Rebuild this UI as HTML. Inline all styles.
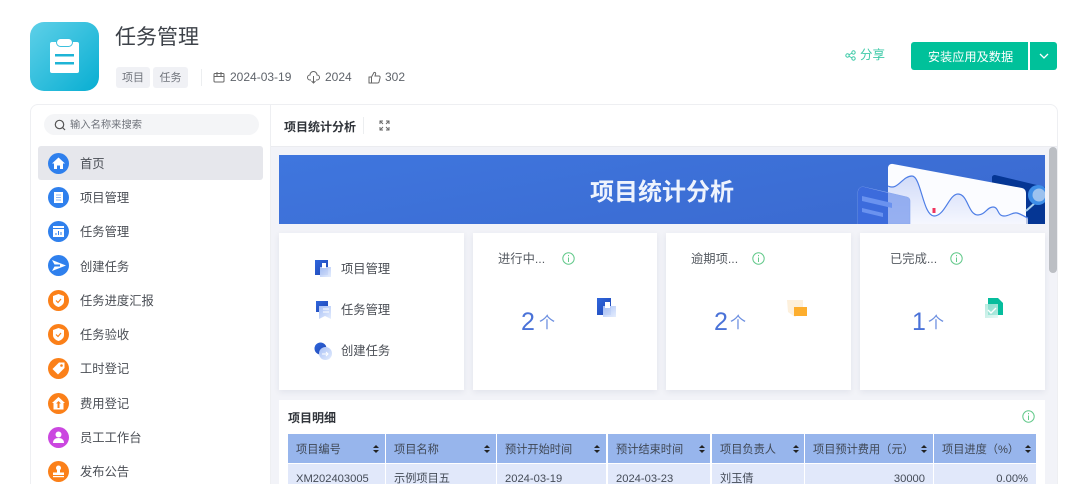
<!DOCTYPE html>
<html lang="zh"><head><meta charset="utf-8"><style>
html,body{margin:0;padding:0;background:#fff;width:1080px;height:484px;overflow:hidden}
#w{position:relative;width:1080px;height:484px;overflow:hidden;font-family:"Liberation Sans","Noto Sans CJK SC",sans-serif;color:#555}
.a{position:absolute}
.t{position:absolute;white-space:nowrap;line-height:1}
svg{position:absolute;display:block;overflow:visible}
.nav{position:absolute;left:80px;font-size:12.3px;color:#4a4e55;line-height:16px;white-space:nowrap}
.dot{position:absolute;left:48px;width:21px;height:21px;border-radius:50%}
.card{position:absolute;top:233px;height:157px;background:#fff;box-shadow:0 2px 6px rgba(40,50,90,.08)}
.th{position:absolute;top:434px;height:29px;background:#97b5ec;font-size:11.2px;color:#3f4754;line-height:32px;white-space:nowrap}
.th span{position:absolute;left:8px}
.th i{position:absolute;top:11px;width:0;height:0;border-left:3px solid transparent;border-right:3px solid transparent;border-bottom:3.500px solid #222}
.th b{position:absolute;top:15.500px;width:0;height:0;border-left:3px solid transparent;border-right:3px solid transparent;border-top:3.500px solid #222}
.td{position:absolute;top:464px;height:20px;background:#e1e8fa;font-size:11.2px;color:#444b57;line-height:30px;white-space:nowrap;overflow:hidden}
</style></head><body><div id="w">

<svg width="0" height="0" style="left:0;top:0"><defs>
<linearGradient id="bl" x1="0" y1="0" x2="1" y2="1"><stop offset="0" stop-color="#2f66dc"/><stop offset="1" stop-color="#1f46b4"/></linearGradient>
<linearGradient id="lb" x1="0" y1="0" x2="1" y2="1"><stop offset="0" stop-color="#a9c1f6"/><stop offset="1" stop-color="#e3ecfd"/></linearGradient>
<linearGradient id="gr" x1="0" y1="0" x2="1" y2="1"><stop offset="0" stop-color="#a5e6d8"/><stop offset="1" stop-color="#e0f7f2"/></linearGradient>
</defs></svg>

<div class="a" style="left:30px;top:22px;width:69px;height:69px;border-radius:14px;background:linear-gradient(135deg,#5ed0e8,#08aed2)"></div>
<svg style="left:30px;top:22px" width="69" height="69" viewBox="0 0 69 69"><rect x="20" y="20" width="29" height="31" rx="2" fill="#fff"/><rect x="26.500" y="16.500" width="16" height="8" rx="4" fill="#fff" stroke="#3cc0de" stroke-width="1"/><rect x="25" y="32" width="19" height="2.500" fill="#1eb4d6"/><rect x="25" y="40" width="19" height="2.500" fill="#1eb4d6"/></svg>
<div class="t" style="left:115px;top:27px;font-size:21px;color:#3d4249">任务管理</div>
<div class="a" style="left:116px;top:67px;width:34px;height:21px;background:#f0f1f5;border-radius:3px;font-size:11px;line-height:23px;text-align:center;color:#70747c">项目</div>
<div class="a" style="left:153px;top:67px;width:35px;height:21px;background:#f0f1f5;border-radius:3px;font-size:11px;line-height:23px;text-align:center;color:#70747c">任务</div>
<div class="a" style="left:201px;top:69px;width:1px;height:17px;background:#eceef0"></div>
<svg style="left:213px;top:71px" width="12" height="12" viewBox="0 0 12 12" fill="none" stroke="#666" stroke-width="1"><rect x="1" y="2.500" width="10" height="8.500" rx="1"/><path d="M1 5.500H11M4 1V5.500M8 1V5.500"/></svg>
<div class="t" style="left:230px;top:71px;font-size:12px;color:#5f646b">2024-03-19</div>
<svg style="left:307px;top:71px" width="13" height="13" viewBox="0 0 13 13" fill="none" stroke="#666" stroke-width="1"><path d="M4 9H3A2.500 2.500 0 0 1 3 4 3.500 3.500 0 0 1 10 4 2.500 2.500 0 0 1 10 9H9M6.500 5V12M4.500 10L6.500 12 8.500 10"/></svg>
<div class="t" style="left:325px;top:71px;font-size:12px;color:#5f646b">2024</div>
<svg style="left:368px;top:71px" width="13" height="13" viewBox="0 0 13 13" fill="none" stroke="#666" stroke-width="1"><path d="M1 6H3.500V12H1ZM3.500 6L6 1.500C7 1 8 1.800 7.600 3L7 5H11C12 5 12.300 6 12 7L11 11C10.800 11.700 10.300 12 9.500 12H3.500"/></svg>
<div class="t" style="left:385px;top:71px;font-size:12px;color:#5f646b">302</div>

<svg style="left:845px;top:50px" width="11" height="11" viewBox="0 0 11 11" fill="none" stroke="#3fcaa8" stroke-width="1"><circle cx="2.500" cy="5.500" r="1.700"/><circle cx="8.500" cy="2.500" r="1.700"/><circle cx="8.500" cy="8.500" r="1.700"/><path d="M4 4.700L7 3.200M4 6.300L7 7.800"/></svg>
<div class="t" style="left:860px;top:49px;font-size:12.500px;color:#3fcaa8">分享</div>
<div class="a" style="left:911px;top:42px;width:117px;height:28px;background:#00c19a;border-radius:3px 0 0 3px;color:#fff;font-size:12.200px;line-height:31px;text-align:center;padding-left:2px;box-sizing:border-box">安装应用及数据</div>
<div class="a" style="left:1030px;top:42px;width:27px;height:28px;background:#00c19a;border-radius:0 3px 3px 0"></div>
<svg style="left:1039px;top:53px" width="10" height="6" viewBox="0 0 10 6" fill="none" stroke="#fff" stroke-width="1.300"><path d="M1 1L5 5 9 1"/></svg>

<div class="a" style="left:30px;top:104px;width:1026px;height:400px;border:1px solid #eeeff2;border-radius:8px"></div>
<div class="a" style="left:270px;top:105px;width:1px;height:379px;background:#eeeff2"></div>

<div class="a" style="left:44px;top:114px;width:215px;height:21px;background:#f4f5f7;border-radius:11px"></div>
<svg style="left:54px;top:119px" width="12" height="12" viewBox="0 0 12 12" fill="none" stroke="#555" stroke-width="1.200"><circle cx="5.500" cy="5.500" r="4.200"/><path d="M8.500 8.500L11 11"/></svg>
<div class="t" style="left:70px;top:120px;font-size:10.300px;color:#70747c;line-height:12px">输入名称来搜索</div>
<div class="a" style="left:38px;top:146px;width:225px;height:34px;background:#e6e7ec;border-radius:3px"></div>

<div class="dot" style="top:153px;background:#2f80ed"></div>
<svg style="left:48px;top:153px" width="21" height="21" viewBox="0 0 21 21"><path d="M10.500 4.500L17 10.500H15V16H12V12.500H9V16H6V10.500H4Z" fill="#fff"/></svg>
<div class="nav" style="top:156px">首页</div>
<div class="dot" style="top:187px;background:#2f80ed"></div>
<svg style="left:48px;top:187px" width="21" height="21" viewBox="0 0 21 21"><rect x="6" y="5" width="9" height="11" fill="#fff"/><path d="M8 8H13M8 10.500H13M8 13H13" stroke="#8fb8f5" stroke-width="1"/></svg>
<div class="nav" style="top:190px">项目管理</div>
<div class="dot" style="top:221px;background:#2f80ed"></div>
<svg style="left:48px;top:221px" width="21" height="21" viewBox="0 0 21 21"><rect x="5" y="5" width="11" height="11" fill="#fff"/><rect x="5" y="7" width="11" height="1" fill="#2f80ed"/><path d="M8 14V12M10.500 14V10M13 14V11" stroke="#2f80ed" stroke-width="1"/></svg>
<div class="nav" style="top:224px">任务管理</div>
<div class="dot" style="top:255px;background:#2f80ed"></div>
<svg style="left:48px;top:255px" width="21" height="21" viewBox="0 0 21 21"><path d="M4 5L18 10.500 4 16 6.500 11.500H12V9.500H6.500Z" fill="#fff"/></svg>
<div class="nav" style="top:259px">创建任务</div>
<div class="dot" style="top:290px;background:#fb8019"></div>
<svg style="left:48px;top:290px" width="21" height="21" viewBox="0 0 21 21"><path d="M10.500 4L16 6V11C16 14 13.500 16 10.500 17 7.500 16 5 14 5 11V6Z" fill="#fff"/><path d="M8 10.500L10 12.500 13 9" fill="none" stroke="#fb8019" stroke-width="1.200"/></svg>
<div class="nav" style="top:293px">任务进度汇报</div>
<div class="dot" style="top:324px;background:#fb8019"></div>
<svg style="left:48px;top:324px" width="21" height="21" viewBox="0 0 21 21"><path d="M10.500 4L16 6V11C16 14 13.500 16 10.500 17 7.500 16 5 14 5 11V6Z" fill="#fff"/><path d="M8 10.500L10 12.500 13 9" fill="none" stroke="#fb8019" stroke-width="1.200"/></svg>
<div class="nav" style="top:327px">任务验收</div>
<div class="dot" style="top:358px;background:#fb8019"></div>
<svg style="left:48px;top:358px" width="21" height="21" viewBox="0 0 21 21"><path d="M11 4.500H16.500V10L10 16.500 4.500 11Z" fill="#fff"/><circle cx="13.500" cy="7.500" r="1.300" fill="#fb8019"/></svg>
<div class="nav" style="top:361px">工时登记</div>
<div class="dot" style="top:393px;background:#fb8019"></div>
<svg style="left:48px;top:393px" width="21" height="21" viewBox="0 0 21 21"><path d="M10.500 4L17 10H15.500V16.500H5.500V10H4Z" fill="#fff"/><path d="M10.500 8L13 10.500H11.500V15H9.500V10.500H8Z" fill="#fb8019"/></svg>
<div class="nav" style="top:396px">费用登记</div>
<div class="dot" style="top:427px;background:#cb47e0"></div>
<svg style="left:48px;top:427px" width="21" height="21" viewBox="0 0 21 21"><circle cx="10.500" cy="7.500" r="3" fill="#fff"/><path d="M5 16C5 12.500 7.500 11 10.500 11S16 12.500 16 16Z" fill="#fff"/></svg>
<div class="nav" style="top:430px">员工工作台</div>
<div class="dot" style="top:461px;background:#fb8019"></div>
<svg style="left:48px;top:461px" width="21" height="21" viewBox="0 0 21 21"><circle cx="10.500" cy="7" r="2.500" fill="#fff"/><rect x="9" y="9" width="3" height="3" fill="#fff"/><rect x="5" y="11.500" width="11" height="2.500" fill="#fff"/><rect x="5" y="15" width="11" height="1.200" fill="#fff"/></svg>
<div class="nav" style="top:464px">发布公告</div>

<div class="t" style="left:284px;top:121px;font-size:12px;font-weight:700;color:#2f3339">项目统计分析</div>
<div class="a" style="left:363px;top:117px;width:1px;height:17px;background:#eceef0"></div>
<svg style="left:379px;top:120px" width="11" height="11" viewBox="0 0 11 11" fill="none" stroke="#666" stroke-width="1"><path d="M1 4V1H4M7 1H10V4M10 7V10H7M4 10H1V7M1 1L4 4M10 1L7 4M10 10L7 7M1 10L4 7"/></svg>

<div class="a" style="left:271px;top:146px;width:786px;height:338px;background:#f2f3f8;border-top:1px solid #ebecf0;box-sizing:border-box"></div>
<div class="a" style="left:1049px;top:147px;width:8px;height:126px;background:#bcbfc4;border-radius:4px"></div>

<div class="a" style="left:279px;top:155px;width:766px;height:69px;background:linear-gradient(170deg,#3f76de,#3a69cf);overflow:hidden"></div>
<div class="t" style="left:590px;top:181px;font-size:24px;font-weight:700;color:#eef3fd">项目统计分析</div>
<svg style="left:850px;top:155px;overflow:hidden" width="195" height="69" viewBox="0 0 195 69">
<defs><linearGradient id="g" x1="0" y1="0" x2="0" y2="1"><stop offset="0" stop-color="#c3d0f6"/><stop offset="1" stop-color="#f3f5fe"/></linearGradient></defs>
<path d="M142 22a3 3 0 0 1 3 -2L195 32V69H142Z" fill="#053694"/>
<path d="M38 13a4 4 0 0 1 5 -4L172 33a5 5 0 0 1 4 5V69H38Z" fill="#fbfcff"/>
<path d="M38 31C48 36 52 21 62 21 71 21 73 61 84 61 95 61 99 39 108 39 118 39 118 60 128 60 135 60 137 52 143 52 149 52 147 61 154 61 160 61 162 57 167 58 171 59 175 62 178 63V69H38Z" fill="url(#g)" opacity=".75"/>
<path d="M38 31C48 36 52 21 62 21 71 21 73 61 84 61 95 61 99 39 108 39 118 39 118 60 128 60 135 60 137 52 143 52 149 52 147 61 154 61 160 61 162 57 167 58 171 59 175 62 178 63" fill="none" stroke="#4e7ee6" stroke-width="1.200"/>
<rect x="82.500" y="53" width="3" height="5" fill="#f0355e"/>
<path d="M8 69V37a5 5 0 0 1 6 -5L57 42a4 4 0 0 1 3 4V69Z" fill="#7f9fee" fill-opacity=".8" stroke="#86a6ee" stroke-width=".6"/>
<path d="M8 69V37a5 5 0 0 1 6 -5L38 38V69Z" fill="#3c6bdc"/>
<path d="M12 41L42 48V53L12 46Z" fill="#6a92ef"/><path d="M12 53L33 58V62L12 57Z" fill="#6a92ef"/>
<path d="M176 56L186 47" stroke="#a8d0ef" stroke-width="2"/>
<circle cx="188" cy="40" r="10" fill="#3e8ee8"/><circle cx="189" cy="40" r="6.500" fill="#9cc2ef"/>
</svg>

<div class="card" style="left:279px;width:185px"></div>
<div class="card" style="left:473px;width:184px"></div>
<div class="card" style="left:666px;width:185px"></div>
<div class="card" style="left:860px;width:185px"></div>

<svg style="left:314px;top:259px" width="18" height="18" viewBox="0 0 18 18"><rect x="1" y="1" width="13" height="15" fill="url(#bl)"/><rect x="6" y="8" width="11" height="10" fill="url(#lb)" opacity=".95"/><rect x="8" y="4" width="4" height="5" fill="#fff"/></svg>
<div class="t" style="left:341px;top:263px;font-size:12.300px;color:#4a4e55">项目管理</div>
<svg style="left:315px;top:300px" width="17" height="19" viewBox="0 0 17 19"><path d="M1 1H13V12H1Z" fill="url(#bl)"/><path d="M4 6H16V19L10 16 4 19Z" fill="url(#lb)"/><path d="M8 9H14M8 12H14" stroke="#fff"/></svg>
<div class="t" style="left:341px;top:304px;font-size:12.300px;color:#4a4e55">任务管理</div>
<svg style="left:314px;top:342px" width="18" height="18" viewBox="0 0 18 18"><circle cx="6.500" cy="6.500" r="6" fill="url(#bl)"/><circle cx="11.500" cy="11.500" r="6.500" fill="url(#lb)"/><path d="M8 12H14M12 10L14 12 12 14" stroke="#fff" fill="none"/></svg>
<div class="t" style="left:341px;top:345px;font-size:12.300px;color:#4a4e55">创建任务</div>

<div class="t" style="left:498px;top:253px;font-size:12.300px;color:#555a61">进行中...</div>
<div class="t" style="left:691px;top:253px;font-size:12.300px;color:#555a61">逾期项...</div>
<div class="t" style="left:890px;top:253px;font-size:12.300px;color:#555a61">已完成...</div>
<svg style="left:562px;top:252px" width="13" height="13" viewBox="0 0 13 13" fill="none" stroke="#62c98a"><circle cx="6.500" cy="6.500" r="5.700"/><path d="M6.500 5.500V10M6.500 3V4.300"/></svg>
<svg style="left:752px;top:252px" width="13" height="13" viewBox="0 0 13 13" fill="none" stroke="#62c98a"><circle cx="6.500" cy="6.500" r="5.700"/><path d="M6.500 5.500V10M6.500 3V4.300"/></svg>
<svg style="left:950px;top:252px" width="13" height="13" viewBox="0 0 13 13" fill="none" stroke="#62c98a"><circle cx="6.500" cy="6.500" r="5.700"/><path d="M6.500 5.500V10M6.500 3V4.300"/></svg>

<div class="t" style="left:521px;top:310px;font-size:25px;color:#4a72d8">2</div>
<div class="t" style="left:539px;top:316px;font-size:16px;color:#6c8fe0">个</div>
<div class="t" style="left:714px;top:310px;font-size:25px;color:#4a72d8">2</div>
<div class="t" style="left:730px;top:316px;font-size:16px;color:#6c8fe0">个</div>
<div class="t" style="left:912px;top:310px;font-size:25px;color:#4a72d8">1</div>
<div class="t" style="left:928px;top:316px;font-size:16px;color:#6c8fe0">个</div>

<svg style="left:597px;top:297px" width="19" height="21" viewBox="0 0 19 21"><rect x="0" y="1" width="14" height="17" fill="url(#bl)"/><rect x="6" y="9" width="13" height="11" fill="url(#lb)" opacity=".95"/><rect x="8" y="5" width="5" height="6" fill="#fff"/></svg>
<svg style="left:786px;top:299px" width="22" height="19" viewBox="0 0 22 19"><path d="M1 1H17V12L9 18 2 13Z" fill="#fdf0dc"/><rect x="8" y="8" width="13" height="9" fill="#fdae2e"/></svg>
<svg style="left:985px;top:297px" width="19" height="21" viewBox="0 0 19 21"><path d="M3 1H13L18 6V18H3Z" fill="#06bd9d"/><rect x="0" y="7" width="13" height="14" fill="url(#gr)" opacity=".8"/><path d="M3 13L6 16 11 11" fill="none" stroke="#fff" stroke-width="1.400"/></svg>

<div class="a" style="left:279px;top:400px;width:766px;height:84px;background:#fff"></div>
<div class="t" style="left:288px;top:412px;font-size:12px;font-weight:700;color:#2f3339">项目明细</div>
<svg style="left:1022px;top:410px" width="13" height="13" viewBox="0 0 13 13" fill="none" stroke="#62c98a"><circle cx="6.500" cy="6.500" r="5.700"/><path d="M6.500 5.500V10M6.500 3V4.300"/></svg>

<div class="th" style="left:288px;width:97px"><span>项目编号</span><i style="left:85px"></i><b style="left:85px"></b></div>
<div class="th" style="left:386px;width:110px"><span>项目名称</span><i style="left:98px"></i><b style="left:98px"></b></div>
<div class="th" style="left:497px;width:109px"><span>预计开始时间</span><i style="left:97px"></i><b style="left:97px"></b></div>
<div class="th" style="left:608px;width:102px"><span>预计结束时间</span><i style="left:91px"></i><b style="left:91px"></b></div>
<div class="th" style="left:712px;width:92px"><span>项目负责人</span><i style="left:81px"></i><b style="left:81px"></b></div>
<div class="th" style="left:805px;width:128px"><span>项目预计费用（元）</span><i style="left:116px"></i><b style="left:116px"></b></div>
<div class="th" style="left:934px;width:102px"><span>项目进度（%）</span><i style="left:91px"></i><b style="left:91px"></b></div>

<div class="td" style="left:288px;width:97px;padding-left:8px;box-sizing:border-box">XM202403005</div>
<div class="td" style="left:386px;width:110px;padding-left:8px;box-sizing:border-box">示例项目五</div>
<div class="td" style="left:497px;width:109px;padding-left:8px;box-sizing:border-box">2024-03-19</div>
<div class="td" style="left:608px;width:102px;padding-left:8px;box-sizing:border-box">2024-03-23</div>
<div class="td" style="left:712px;width:92px;padding-left:8px;box-sizing:border-box">刘玉倩</div>
<div class="td" style="left:805px;width:128px;padding-right:8px;box-sizing:border-box;text-align:right">30000</div>
<div class="td" style="left:934px;width:102px;padding-right:8px;box-sizing:border-box;text-align:right">0.00%</div>
</div></body></html>
